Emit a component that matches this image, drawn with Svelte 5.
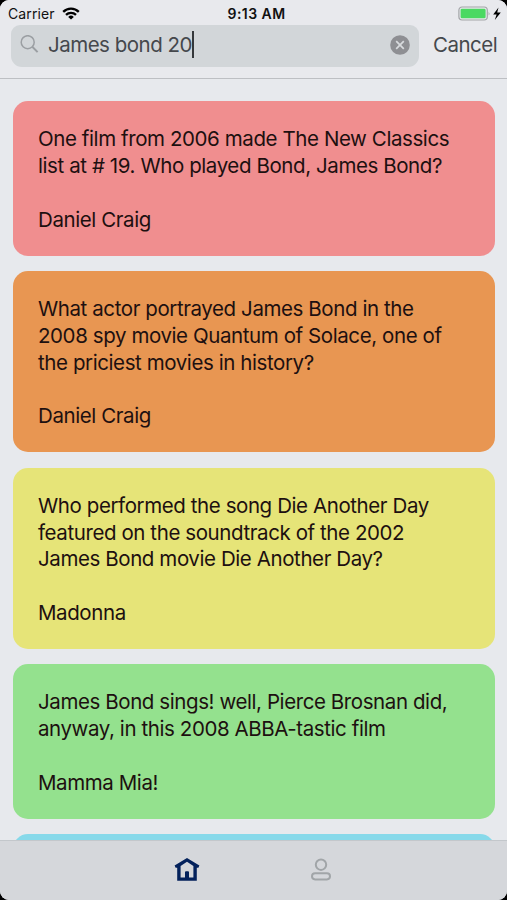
<script lang="ts">
  type Card = { color: string; lines: string[]; answer: string }

  let query = $state('James bond 20')

  const cards: Card[] = [
    {
      color: '#f08e8f',
      lines: ['One film from 2006 made The New Classics', 'list at # 19. Who played Bond, James Bond?'],
      answer: 'Daniel Craig'
    },
    {
      color: '#e89652',
      lines: ['What actor portrayed James Bond in the', '2008 spy movie Quantum of Solace, one of', 'the priciest movies in history?'],
      answer: 'Daniel Craig'
    },
    {
      color: '#e6e478',
      lines: ['Who performed the song Die Another Day', 'featured on the soundtrack of the 2002', 'James Bond movie Die Another Day?'],
      answer: 'Madonna'
    },
    {
      color: '#94e18e',
      lines: ['James Bond sings! well, Pierce Brosnan did,', 'anyway, in this 2008 ABBA-tastic film'],
      answer: 'Mamma Mia!'
    },
    { color: '#87d9ea', lines: [], answer: '' }
  ]
</script>

<div class="screen">
  <div class="phone">
    <header>
      <div class="status">
        <div class="carrier">
          <span>Carrier</span>
          <svg width="18" height="13" viewBox="0 0 18 13" fill="none" stroke="#000" stroke-width="2.3">
            <path d="M1.2 4.9a11 11 0 0 1 15.6 0" />
            <path d="M4 7.9a7.1 7.1 0 0 1 10 0" />
            <path d="M9 12.6 6.2 9.9a4 4 0 0 1 5.6 0Z" fill="#000" stroke="none" />
          </svg>
        </div>
        <div class="time">9:13 AM</div>
        <div class="power">
          <svg width="44" height="16" viewBox="0 0 44 16">
            <rect x=".9" y="1" width="28.4" height="13" rx="3.2" fill="#e8e9ed" stroke="#a3a5a8" stroke-width="1.2" />
            <rect x="2.6" y="2.7" width="25" height="9.6" rx="1.4" fill="#4bd962" />
            <path d="M30.6 5.4q1.8 2.1 0 4.2Z" fill="#a3a5a8" />
            <path d="M40.5 1.6 35.2 8.6h3.4L36.8 14l6-7.6h-3.6Z" fill="#000" />
          </svg>
        </div>
      </div>

      <div class="search">
        <div class="field">
          <svg class="glass" width="20" height="20" viewBox="0 0 20 20" fill="none" stroke="#9b9fa3" stroke-width="1.5">
            <circle cx="7.7" cy="7.2" r="6.5" />
            <path d="m12.3 11.8 5.3 5.3" stroke-width="2" />
          </svg>
          <span class="query">{query}</span><i class="caret"></i>
          <button class="clear" aria-label="Clear" onclick={() => (query = '')}>
            <svg width="20" height="20" viewBox="0 0 20 20">
              <circle cx="10" cy="10" r="9.8" fill="#8e8f93" />
              <path d="m6.2 6.2 7.6 7.6m0-7.6-7.6 7.6" stroke="#d8dbde" stroke-width="1.7" />
            </svg>
          </button>
        </div>
        <button class="cancel">Cancel</button>
      </div>
    </header>

    <main>
      {#each cards as card}
        <article style:background={card.color}>
          {#each card.lines as line}
            <div>{line}</div>
          {/each}
          <div class="answer">{card.answer}</div>
        </article>
      {/each}
    </main>

    <nav>
      <a href="#home" aria-label="Home">
        <svg width="26" height="24" viewBox="0 0 26 24">
          <path fill="#03215b" fill-rule="evenodd" d="M13 0 25.4 7.6 24.4 9.8H22.8V22.8H3.2V9.8H1.6L.6 7.6ZM13 3.8 6.6 8V19.4H11V14.2q0-1 1-1h2q1 0 1 1V19.4H19.4V8Z" />
        </svg>
      </a>
      <a href="#profile" aria-label="Profile">
        <svg width="22" height="24" viewBox="0 0 22 24" fill="none" stroke="#a1a5a8" stroke-width="2">
          <circle cx="11" cy="6.7" r="5.2" />
          <rect x="2" y="15.2" width="18" height="6.2" rx="3.1" />
        </svg>
      </a>
    </nav>
  </div>
</div>

<style>
  :global(body) {
    margin: 0;
    background: #000;
  }

  .screen {
    width: 507px;
    height: 900px;
    background: #000;
    font-family: Inter, 'Liberation Sans', sans-serif;
  }

  .phone {
    height: 100%;
    display: flex;
    flex-direction: column;
    overflow: hidden;
    border-radius: 9px;
    background: #e7e9ed;
  }

  header {
    flex: none;
    box-sizing: border-box;
    height: 79px;
    border-bottom: 1px solid #bdbfc3;
    background: #e8e9ed;
  }

  .status {
    height: 25px;
    display: grid;
    grid-template-columns: 1fr auto 1fr;
    align-items: center;
    font-size: 14px;
    line-height: 27px;
    color: #111;
  }

  .carrier {
    display: flex;
    align-items: center;
    gap: 7px;
    padding-left: 8px;
    letter-spacing: 0.1px;
  }

  .carrier svg {
    margin-top: -1px;
  }

  .time {
    padding-left: 6px;
    font-weight: 600;
    letter-spacing: 0.45px;
  }

  .power {
    display: flex;
    justify-content: flex-end;
    padding-right: 5px;
  }

  .search {
    display: flex;
    align-items: center;
    padding-left: 11px;
  }

  .field {
    box-sizing: border-box;
    width: 408px;
    height: 42px;
    display: flex;
    align-items: center;
    padding: 0 9px 3px;
    border-radius: 9px 9px 11px 11px;
    background: #d2d6d9;
  }

  .query {
    margin-left: 8px;
    font-size: 20.5px;
    letter-spacing: -0.5px;
    color: #45484c;
  }

  .caret {
    width: 2px;
    height: 27px;
    background: #35383b;
  }

  button {
    padding: 0;
    border: none;
    background: none;
    font: inherit;
    cursor: pointer;
  }

  .clear {
    display: flex;
    margin-left: auto;
  }

  .cancel {
    margin: -3px 0 0 14px;
    font-size: 20.5px;
    letter-spacing: -0.5px;
    color: #45484c;
  }

  main {
    flex: 1;
    min-height: 0;
    display: flex;
    flex-direction: column;
    gap: 15.1px;
    padding: 22px 12px 0 13px;
    overflow: hidden;
  }

  article {
    flex: none;
    padding: 25.2px 25px 22.4px;
    border-radius: 15px;
    font-size: 20.5px;
    line-height: 26.8px;
    letter-spacing: -0.41px;
    white-space: nowrap;
    color: #1d1010;
  }

  .answer {
    margin-top: 26.8px;
    min-height: 26.8px;
  }

  nav {
    flex: none;
    box-sizing: border-box;
    height: 60px;
    display: flex;
    justify-content: center;
    gap: 110px;
    padding: 17px 2px 0 0;
    border-top: 1px solid #c3c7cb;
    background: #d5d7db;
  }
</style>
